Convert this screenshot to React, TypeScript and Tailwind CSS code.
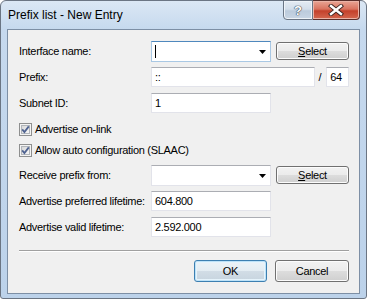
import React from "react";

function Btn({ children, w, h, def }: { children: React.ReactNode; w: string; h: string; def?: boolean }) {
  return (
    <div
      className={
        "flex items-center justify-center rounded-[3px] border text-[11px] leading-none tracking-[-0.3px] " +
        w +
        " " +
        h +
        (def
          ? " border-[#3c7fb1] bg-[linear-gradient(#ecf3f8,#e3ecf2_50%,#d2dde6_50%,#c7d4df)] shadow-[inset_0_0_0_1px_#bde2f8,inset_0_0_0_2px_#e6f3fb]"
          : " border-[#707070] bg-[linear-gradient(#f2f2f2,#ebebeb_50%,#dddddd_50%,#cfcfcf)] shadow-[inset_0_0_0_1px_#fcfcfc]")
      }
    >
      {children}
    </div>
  );
}

function Combo({ focused, caret }: { focused?: boolean; caret?: boolean }) {
  return (
    <div
      className={
        "relative flex h-[21px] w-[120px] items-center border bg-white pl-[3px] " +
        (focused ? "border-[#a9c8e4] border-t-[#4f88bd]" : "border-[#e2e3ea] border-t-[#abadb3]")
      }
    >
      {caret && <div className="h-[13px] w-px bg-black" />}
      <svg className="absolute right-[4px] top-[8px]" width="7" height="4" viewBox="0 0 7 4">
        <path d="M0 0 H7 L3.5 4 Z" fill="#000" />
      </svg>
    </div>
  );
}

function Input({ value, w }: { value: string; w: string }) {
  return (
    <div className={"flex h-[20px] items-center border border-[#e2e3ea] border-t-[#abadb3] bg-white pl-[3px] " + w}>
      {value}
    </div>
  );
}

function Check({ label }: { label: string }) {
  return (
    <div className="flex h-[13px] items-center">
      <div className="relative h-[13px] w-[13px] border border-[#8e8f8f] bg-[#f4f4f4] p-px">
        <div className="h-full w-full border border-[#b1b5ba] bg-[linear-gradient(135deg,#d9d9d9,#f6f6f6)]" />
        <svg className="absolute left-0 top-0" width="11" height="11" viewBox="0 0 11 11">
          <path d="M2.2 5.4 L4.4 8 L8.8 2.4" fill="none" stroke="#4f6391" strokeWidth="1.8" />
        </svg>
      </div>
      <span className="ml-[3px]">{label}</span>
    </div>
  );
}

function Row({ label, children, cls }: { label: string; children: React.ReactNode; cls: string }) {
  return (
    <div className={"flex items-center " + cls}>
      <div className="w-[132px] shrink-0">{label}</div>
      {children}
    </div>
  );
}

export default function App() {
  return (
    <div className="h-[300px] w-[367px] bg-white font-['Liberation_Sans',Arial,sans-serif] text-black">
      <div className="flex h-[299px] w-[367px] flex-col rounded-t-[6px] rounded-b-[3px] border border-[#6b7583] bg-[linear-gradient(180deg,#dbe7f4_0px,#c6d9ee_28px,#bcd2ea)] px-[6px] pb-[4px]">
        <div className="flex h-[28px] justify-between">
          <div className="ml-[1px] self-center text-[12px] leading-none">Prefix list - New Entry</div>
          <div className="-mt-px flex self-start">
            <div className="flex h-[20px] w-[30px] items-center justify-center rounded-bl-[4px] border border-[#6a7584] bg-[linear-gradient(#e4ebf3,#d3deea_45%,#bccbdc_55%,#c9d6e4)] shadow-[inset_0_0_0_1px_#eef3f8]">
              <span className="text-[13px] font-bold leading-none text-white [text-shadow:0_0_1px_#3a4658,0_0_1px_#3a4658,0_0_1px_#3a4658]">
                ?
              </span>
            </div>
            <div className="flex h-[20px] w-[47px] items-center justify-center rounded-br-[4px] border border-l-0 border-[#5a2e2a] bg-[linear-gradient(#e9a595,#d9735f_45%,#c4412b_55%,#d4674f)] shadow-[inset_0_0_0_1px_#eab3a6]">
              <svg width="16" height="12" viewBox="0 0 16 12">
                <path d="M3 2 L13 10 M13 2 L3 10" stroke="#3b2320" strokeWidth="4.2" strokeLinecap="square" />
                <path d="M3 2 L13 10 M13 2 L3 10" stroke="#ffffff" strokeWidth="2.4" strokeLinecap="square" />
              </svg>
            </div>
          </div>
        </div>
        <div className="flex flex-1 flex-col border border-[#7d8fa5] bg-[#f0f0f0] pl-[11px] pr-[10px] pt-[11px] text-[11px] leading-none tracking-[-0.3px]">
          <Row label="Interface name:" cls="h-[21px]">
            <Combo focused caret />
            <div className="ml-[5px] self-start pt-px">
              <Btn w="w-[73px]" h="h-[18px]">
                <span>
                  <span className="underline">S</span>elect
                </span>
              </Btn>
            </div>
          </Row>
          <Row label="Prefix:" cls="mt-[5px] h-[20px]">
            <Input value="::" w="w-[167px]" />
            <span className="ml-[3px] w-[5px]">/</span>
            <Input value="64" w="ml-[3px] w-[23px]" />
          </Row>
          <Row label="Subnet ID:" cls="mt-[6px] h-[20px]">
            <Input value="1" w="w-[120px]" />
          </Row>
          <div className="mt-[10px]">
            <Check label="Advertise on-link" />
          </div>
          <div className="mt-[8px]">
            <Check label="Allow auto configuration (SLAAC)" />
          </div>
          <Row label="Receive prefix from:" cls="mt-[8px] h-[21px]">
            <Combo />
            <div className="ml-[5px] self-start pt-px">
              <Btn w="w-[73px]" h="h-[18px]">
                <span>
                  <span className="underline">S</span>elect
                </span>
              </Btn>
            </div>
          </Row>
          <Row label="Advertise preferred lifetime:" cls="mt-[5px] h-[20px]">
            <Input value="604.800" w="w-[120px]" />
          </Row>
          <Row label="Advertise valid lifetime:" cls="mt-[6px] h-[20px]">
            <Input value="2.592.000" w="w-[120px]" />
          </Row>
          <div className="mt-[13px] h-px bg-[#a0a0a0]" />
          <div className="h-px bg-white" />
          <div className="mt-[8px] flex justify-end gap-[8px]">
            <Btn w="w-[73px]" h="h-[22px]" def>
              OK
            </Btn>
            <Btn w="w-[74px]" h="h-[22px]">
              Cancel
            </Btn>
          </div>
        </div>
      </div>
    </div>
  );
}
